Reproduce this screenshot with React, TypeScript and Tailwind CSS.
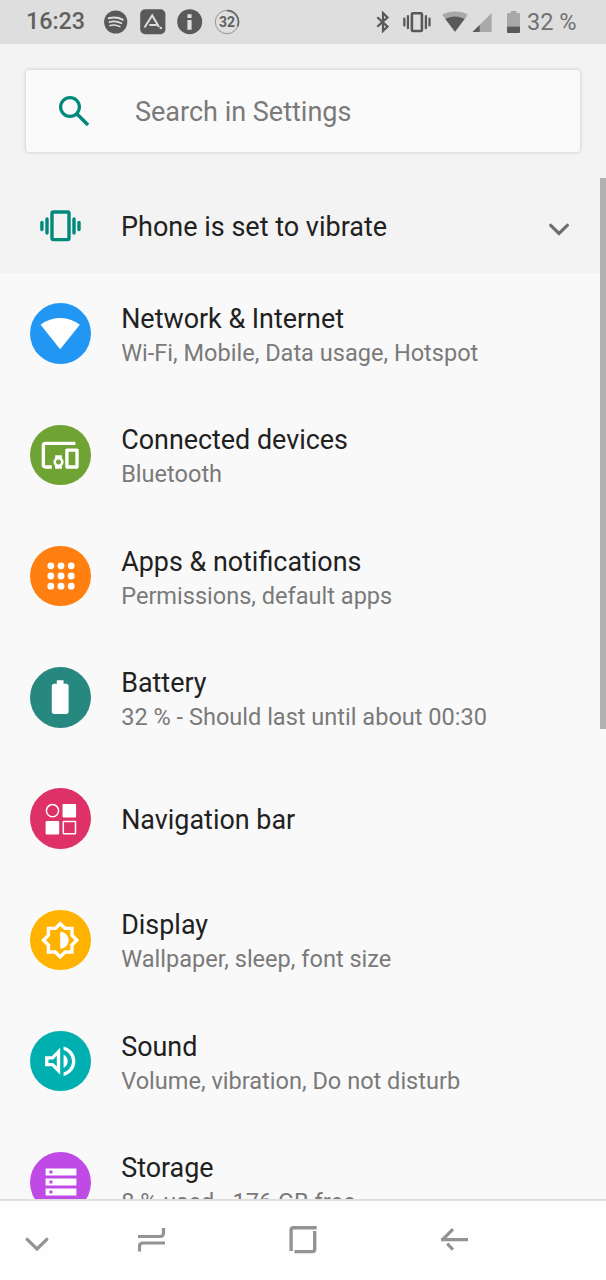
import type { ReactNode } from 'react';

type SettingsItem = {
  title: string;
  summary?: string;
  color: string;
  icon: ReactNode;
};

// 24-unit glyph inside the coloured circle
function Glyph({ d }: { d: string }) {
  return (
    <svg viewBox="0 0 24 24" className="size-[40.4px]" fill="white">
      <path fillRule="evenodd" d={d} />
    </svg>
  );
}

const items: SettingsItem[] = [
  {
    title: 'Network & Internet',
    summary: 'Wi-Fi, Mobile, Data usage, Hotspot',
    color: 'bg-[#2196f3]',
    icon: <Glyph d="M12.01 21.49L23.64 7c-.45-.34-4.93-4-11.64-4C5.28 3 .81 6.66.36 7l11.63 14.49.01.01.01-.01z" />,
  },
  {
    title: 'Connected devices',
    summary: 'Bluetooth',
    color: 'bg-[#6fa334]',
    icon: (
      <Glyph d="M3 6h18V4H3c-1.1 0-2 .9-2 2v12c0 1.1.9 2 2 2h4v-2H3V6zm10 6H9v1.78c-.61.55-1 1.33-1 2.22s.39 1.67 1 2.22V20h4v-1.78c.61-.55 1-1.34 1-2.22s-.39-1.67-1-2.22V12zm-2 5.5c-.83 0-1.5-.67-1.5-1.5s.67-1.5 1.5-1.5 1.5.67 1.5 1.5-.67 1.5-1.5 1.5zM22 8h-6c-.5 0-1 .5-1 1v10c0 .5.5 1 1 1h6c.5 0 1-.5 1-1V9c0-.5-.5-1-1-1zm-1 10h-4v-8h4v8z" />
    ),
  },
  {
    title: 'Apps & notifications',
    summary: 'Permissions, default apps',
    color: 'bg-[#ff7f11]',
    icon: (
      <svg viewBox="0 0 60 60" className="size-[60px]" fill="white">
        {[19.8, 30, 40.2].map((y) =>
          [19.8, 30, 40.2].map((x) => <circle key={`${x}-${y}`} cx={x} cy={y} r="3.4" />)
        )}
      </svg>
    ),
  },
  {
    title: 'Battery',
    summary: '32 % - Should last until about 00:30',
    color: 'bg-[#26887f]',
    icon: (
      <Glyph d="M15.67 4H14V2h-4v2H8.33C7.6 4 7 4.6 7 5.33v15.33C7 21.4 7.6 22 8.33 22h7.33c.74 0 1.34-.6 1.34-1.33V5.33C17 4.6 16.4 4 15.67 4z" />
    ),
  },
  {
    title: 'Navigation bar',
    color: 'bg-[#dd3168]',
    icon: (
      <svg viewBox="0 0 60 60" className="size-[60px]" fill="white">
        <circle cx="21.5" cy="21.7" r="6.1" fill="none" stroke="white" strokeWidth="1.5" />
        <rect x="31.5" y="15" width="13.6" height="13.6" rx="1" />
        <rect x="14.6" y="31.9" width="13.6" height="13.6" rx="1" />
        <rect x="32.3" y="32.6" width="12.2" height="12.2" rx="0.5" fill="none" stroke="white" strokeWidth="1.5" />
      </svg>
    ),
  },
  {
    title: 'Display',
    summary: 'Wallpaper, sleep, font size',
    color: 'bg-[#ffb300]',
    icon: (
      <Glyph d="M20 8.69V4h-4.69L12 .69 8.69 4H4v4.69L.69 12 4 15.31V20h4.69L12 23.31 15.31 20H20v-4.69L23.31 12 20 8.69zm-2 5.79V18h-3.52L12 20.48 9.52 18H6v-3.52L3.52 12 6 9.52V6h3.52L12 3.52 14.48 6H18v3.52L20.48 12 18 14.48zM12 7v10c2.76 0 5-2.24 5-5s-2.24-5-5-5z" />
    ),
  },
  {
    title: 'Sound',
    summary: 'Volume, vibration, Do not disturb',
    color: 'bg-[#00afaf]',
    icon: (
      <Glyph d="M3 9v6h4l5 5V4L7 9H3zm7-.17v6.34L7.83 13H5v-2h2.83L10 8.83zM16.5 12c0-1.77-1.02-3.29-2.5-4.03v8.05c1.48-.73 2.5-2.25 2.5-4.02zM14 3.23v2.06c2.89.86 5 3.54 5 6.71s-2.11 5.85-5 6.71v2.06c4.01-.91 7-4.49 7-8.77 0-4.28-2.99-7.86-7-8.77z" />
    ),
  },
  {
    title: 'Storage',
    summary: '8 % used - 176 GB free',
    color: 'bg-[#bf4ae5]',
    icon: (
      <svg viewBox="0 0 60 60" className="size-[60px]" fill="white">
        <path
          fillRule="evenodd"
          d="M14.6 16.6h30.8v7H14.6zM18.4 18.6v3h3v-3zM14.6 26.6h30.8v7H14.6zM18.4 28.6v3h3v-3zM14.6 36.6h30.8v7H14.6zM18.4 38.6v3h3v-3z"
        />
      </svg>
    ),
  },
];

function StatusBar() {
  return (
    <header className="flex h-11 shrink-0 items-center bg-[#dedede] text-[#595959]">
      <span className="ml-[26px] w-[59px] text-[23.3px] leading-none font-medium text-[#606060]">16:23</span>
      <svg viewBox="0 0 24 24" className="ml-[19px] size-6">
        <circle cx="11.7" cy="12" r="11.6" fill="currentColor" />
        <g fill="none" stroke="#dedede" strokeLinecap="round">
          <path d="M4.8 8.3c4.500-1.300 9.800-.9 13.800 1.400" strokeWidth="2.1" />
          <path d="M5.4 12c4-1.100 8.400-.7 11.900 1.300" strokeWidth="1.8" />
          <path d="M6 15.500c3.400-.8 6.900-.5 9.900 1.200" strokeWidth="1.5" />
        </g>
      </svg>
      <svg viewBox="0 0 26 26" className="ml-3 size-[26px]">
        <rect x="0.2" y="0.2" width="25.2" height="25" rx="5" fill="currentColor" />
        <path d="M4.500 18.500L12.200 6.500l6.800 11.500M9.300 16.100h7.500" fill="none" stroke="#dedede" strokeWidth="2" />
        <circle cx="20.800" cy="19" r="1.3" fill="#dedede" />
      </svg>
      <svg viewBox="0 0 26 26" className="ml-[11px] size-[26px]">
        <circle cx="12.7" cy="12.7" r="12.5" fill="currentColor" />
        <path d="M10.400 5.200h4.200v3.800h-4.200zM10.400 10.900h4.200v9.800h-4.200z" fill="#dedede" />
      </svg>
      <svg viewBox="0 0 26 26" className="ml-[11px] size-[26px]">
        <circle cx="13" cy="13" r="11.7" fill="none" stroke="#8c8c8c" strokeWidth="0.9" />
        <path d="M13 1.600A11.400 11.400 0 0 1 23.600 17.300" fill="none" stroke="#666" strokeWidth="1.8" />
        <text x="13" y="17.7" textAnchor="middle" fontSize="14" fontWeight="700" fill="#606060">
          32
        </text>
      </svg>
      <div className="flex-1" />
      <svg viewBox="0 0 14 22" className="h-[22px] w-3.5">
        <path d="M1.300 6.200l10.200 9.400L7 20V2l4.500 4.400L1.300 15.800" fill="none" stroke="currentColor" strokeWidth="2.2" />
      </svg>
      <svg viewBox="0 0 28 22" className="ml-[13px] h-[22px] w-7" fill="none" stroke="currentColor">
        <rect x="8.900" y="2.200" width="10" height="17.800" rx="1" strokeWidth="2.6" />
        <path d="M4.900 5.200v12M22.900 5.200v12M1.300 7.600v7M26.500 7.600v7" strokeWidth="2.3" strokeLinecap="round" />
      </svg>
      <svg viewBox="0 0 26 22" className="ml-[11px] h-[22px] w-[26px]">
        <path d="M0.300 3.900C7.500-.5 18.500-.5 25.700 3.900L13 20.800z" fill="#a8a8a8" />
        <path d="M3.400 8c5.800-3.500 13.400-3.500 19.200 0L13 20.800z" fill="currentColor" />
      </svg>
      <svg viewBox="0 0 20 22" className="ml-[4px] h-[22px] w-5">
        <path d="M0.500 21L19.700 2v19z" fill="#a8a8a8" />
        <path d="M0.500 21L7.600 14v7z" fill="currentColor" />
      </svg>
      <svg viewBox="0 0 14 24" className="ml-[15px] h-6 w-3.5">
        <path d="M4 1h5.500v2H12q1 0 1 1v12.500H0V4q0-1 1-1h3z" fill="#a8a8a8" />
        <path d="M0 16.500h13V22q0 1-1 1H1q-1 0-1-1z" fill="currentColor" />
      </svg>
      <span className="mr-[29px] ml-[6px] w-[50px] pt-px text-[23.600px] leading-none whitespace-nowrap text-[#717171]">32 %</span>
    </header>
  );
}

function NavigationBar() {
  return (
    <nav className="flex h-[81px] shrink-0 items-start border-t-2 border-[#dedede] bg-[#fefefe] pt-[24px] text-[#939393]">
      <svg viewBox="0 0 24 30" className="ml-[25px] h-[30px] w-6" fill="none" stroke="currentColor">
        <path d="M2.200 14.300L12 24l9.800-9.700" strokeWidth="3.2" strokeLinecap="round" />
      </svg>
      <svg viewBox="0 0 28 30" className="ml-[89px] h-[30px] w-7" fill="none" stroke="currentColor">
        <path d="M0 11.500h22q3.500 0 3.500-3.500V3M27 18H5q-3.500 0-3.500 3.500v5" strokeWidth="3.200" />
      </svg>
      <svg viewBox="0 0 28 30" className="ml-[123px] h-[30px] w-7" fill="none" stroke="currentColor">
        <path d="M27.700 2.700H4.500q-2.400 0-2.400 2.400V26M25.700 6v18q0 2.600-2.400 2.600H5.500" strokeWidth="3.400" />
      </svg>
      <svg viewBox="0 0 28 30" className="ml-[124px] h-[30px] w-7" fill="none" stroke="currentColor">
        <path d="M12 4.200L2.800 13.400M2 14.700h25M6.200 18.600l5.800 6" strokeWidth="3.200" />
        <path d="M0 13.200L2 12v4.200H0z" fill="currentColor" stroke="none" />
      </svg>
    </nav>
  );
}

export default function App() {
  return (
    <div
      className="relative flex h-[1280px] w-[606px] flex-col overflow-hidden bg-[#f9f9f9]"
      style={{ fontFamily: 'Roboto, sans-serif' }}
    >
      <StatusBar />

      {/* Search and ringer mode */}
      <section className="h-[229px] shrink-0 bg-[#f3f3f3] pt-[26px]">
        <div className="mx-[26px] flex h-[82px] items-center rounded-[3px] bg-[#fafafa] shadow-[0_0_3px_1px_rgba(0,0,0,0.12)]">
          <svg viewBox="0 0 32 32" className="ml-8 size-8" fill="none" stroke="#00897b">
            <circle cx="12" cy="12" r="9.4" strokeWidth="3.2" />
            <path d="M19 19L30 30" strokeWidth="3.6" />
          </svg>
          <span className="ml-[45px] pt-[3px] text-[27px] leading-none text-[#7a7a7a]">Search in Settings</span>
        </div>
        <div className="mt-[27px] flex h-[94px] items-center">
          <svg viewBox="0 0 42 32" className="mb-px ml-[40px] h-8 w-[42px]" fill="none" stroke="#00897b">
            <rect x="12" y="2" width="17" height="27.6" rx="1.3" strokeWidth="3.4" />
            <path d="M7 9v14M34 9v14M1.900 12.500v7M39 12.500v7" strokeWidth="3.400" strokeLinecap="round" />
          </svg>
          <span className="ml-[39px] flex-1 pt-[2px] text-[27px] leading-none text-[#212121]">Phone is set to vibrate</span>
          <svg viewBox="0 0 20 14" className="mt-[7px] mr-[37px] h-3.5 w-5" fill="none" stroke="#6f6f6f">
            <path d="M1.700 2.300L10 10.400l8.300-8.100" strokeWidth="3.2" strokeLinecap="round" />
          </svg>
        </div>
      </section>

      <main className="min-h-0 flex-1 overflow-hidden">
        {items.map((item) => (
          <div key={item.title} className="flex h-[121.25px] items-center pl-[30.3px]">
            <div className={`flex size-[60.6px] shrink-0 items-center justify-center rounded-full ${item.color}`}>
              {item.icon}
            </div>
            <div className={`ml-[30.3px] whitespace-nowrap ${item.summary ? 'pt-[6px]' : 'pt-[2px]'}`}>
              <div className="text-[26.9px] leading-[34px] text-[#212121]">{item.title}</div>
              {item.summary && <div className="text-[23.55px] leading-[35px] text-[#7a7a7a]">{item.summary}</div>}
            </div>
          </div>
        ))}
      </main>

      <NavigationBar />

      {/* Scrollbar thumb */}
      <div className="absolute top-[178px] right-0 h-[551px] w-[6.5px] bg-[#b0b0b0]" />
    </div>
  );
}
